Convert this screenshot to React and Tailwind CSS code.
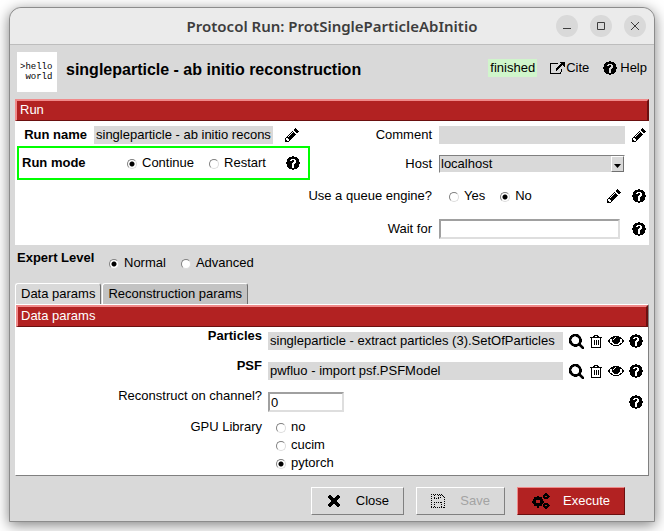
import React, { useState } from 'react';
import { FaQuestionCircle } from 'react-icons/fa';

const PATHS = {
    pencil: 'M491 1536l91-91-235-235-91 91v107h128v128h107zm523-928q0-22-22-22-10 0-17 7l-542 542q-7 7-7 17 0 22 22 22 10 0 17-7l542-542q7-7 7-17zm-54-192l416 416-832 832h-416v-416zm683 96q0 53-37 90l-166 166-416-416 166-165q36-38 90-38 53 0 91 38l235 234q37 39 37 91z',
    external: 'M1472 992v320q0 119-84.5 203.5t-203.5 84.5h-832q-119 0-203.5-84.5t-84.5-203.5v-832q0-119 84.5-203.5t203.5-84.5h704q14 0 23 9t9 23v64q0 14-9 23t-23 9h-704q-66 0-113 47t-47 113v832q0 66 47 113t113 47h832q66 0 113-47t47-113v-320q0-14 9-23t23-9h64q14 0 23 9t9 23zm384-864v512q0 26-19 45t-45 19-45-19l-176-176-652 652q-10 10-23 10t-23-10l-114-114q-10-10-10-23t10-23l652-652-176-176q-19-19-19-45t19-45 45-19h512q26 0 45 19t19 45z',
    eye: 'M1664 960q-152-236-381-353 61 104 61 225 0 185-131.5 316.5t-316.5 131.5-316.5-131.5-131.5-316.5q0-121 61-225-229 117-381 353 133 205 333.5 326.5t434.5 121.5 434.5-121.5 333.5-326.5zm-720-384q0-20-14-34t-34-14q-125 0-214.5 89.5t-89.5 214.5q0 20 14 34t34 14 34-14 14-34q0-86 61-147t147-61q20 0 34-14t14-34zm848 384q0 34-20 69-140 230-376.5 368.5t-499.5 138.5-499.5-139-376.5-368q-20-35-20-69t20-69q140-229 376.5-368t499.5-139 499.5 139 376.5 368q20 35 20 69z',
    search: 'M1216 832q0-185-131.5-316.5t-316.5-131.5-316.5 131.5-131.5 316.5 131.5 316.5 316.5 131.5 316.5-131.5 131.5-316.5zm512 832q0 52-38 90t-90 38q-54 0-90-38l-343-342q-179 124-399 124-143 0-273.5-55.5t-225-150-150-225-55.5-273.5 55.5-273.5 150-225 225-150 273.5-55.5 273.5 55.5 225 150 150 225 55.5 273.5q0 220-124 399l343 343q37 37 37 90z',
    times: 'M1490 1322q0 40-28 68l-136 136q-28 28-68 28t-68-28l-294-294-294 294q-28 28-68 28t-68-28l-136-136q-28-28-28-68t28-68l294-294-294-294q-28-28-28-68t28-68l136-136q28-28 68-28t68 28l294 294 294-294q28-28 68-28t68 28l136 136q28 28 28 68t-28 68l-294 294 294 294q28 28 28 68z',
};

const Pencil = () => (
    <svg viewBox="128 128 1536 1536" className="w-3.5 h-3.5" fill="currentColor" shapeRendering="crispEdges">
        <path d={PATHS.pencil} />
    </svg>
);

const External = () => (
    <svg viewBox="0 0 1856 1664" className="w-4 h-3.5" fill="currentColor" shapeRendering="crispEdges">
        <path d={PATHS.external} />
    </svg>
);

const Eye = () => (
    <svg viewBox="0 320 1792 1280" className="w-4 h-3" fill="currentColor" shapeRendering="crispEdges">
        <path d={PATHS.eye} />
    </svg>
);

const Times = () => (
    <svg viewBox="302 366 1188 1188" className="w-3 h-3" fill="currentColor" shapeRendering="crispEdges">
        <path d={PATHS.times} />
    </svg>
);

const Search = () => (
    <svg viewBox="64 128 1664 1664" className="w-[15px] h-[15px]" fill="currentColor" stroke="currentColor" strokeWidth="40" shapeRendering="crispEdges">
        <path d={PATHS.search} />
    </svg>
);

const Trash = () => (
    <svg viewBox="0 0 12 13" className="w-3 h-[13px]" fill="none" stroke="currentColor" shapeRendering="crispEdges">
        <path d="M3.5 2.5v-1h1v-1h3v1h1v1M0 2.5h12M1.5 2.5v10h9v-10M4.5 5v5M6.5 5v5M8.5 5v5" />
    </svg>
);

const Floppy = () => (
    <svg viewBox="0 0 14 14" className="w-3.5 h-3.5" fill="none" stroke="currentColor" strokeDasharray="1 1" shapeRendering="crispEdges">
        <path d="M0 .5h11M13.5 3v11M0 13.5h14M.5 0v14M11 1.5h1M12 2.5h1M3.5 1v4M3 4.5h6M9.5 1v4M7.5 1v3M3.5 8v6M3 8.5h8M10.5 8v6" />
    </svg>
);

const Cogs = () => (
    <svg viewBox="0 0 18 16" className="w-[18px] h-4" fill="none" stroke="currentColor" shapeRendering="crispEdges">
        <circle cx="6" cy="8.5" r="3.5" strokeWidth="3" />
        <path d="M6 2.5v2M6 12.5v2M0 8.5h2M10 8.5h2M2 4.5l1.5 1.5M10 4.5L8.5 6M2 12.5L3.5 11M10 12.5L8.5 11" strokeWidth="2" />
        <circle cx="14" cy="3.5" r="1.8" strokeWidth="2" />
        <path d="M14 0v1M11 3.5h1M16.5 3.5h1M12 1l1 1M16 1l-1 1M12 6l1-1M16 6l-1-1" strokeWidth="1.4" />
        <circle cx="14" cy="12.5" r="1.8" strokeWidth="2" />
        <path d="M14 15v1M11 12.5h1M16.5 12.5h1M12 10l1 1M16 10l-1 1M12 15l1-1M16 15l-1-1" strokeWidth="1.4" />
    </svg>
);

const Help = () => <FaQuestionCircle className="w-3.5 h-3.5" shapeRendering="crispEdges" />;

const IconButton = ({ label, children }) => (
    <button type="button" aria-label={label} className="shrink-0 flex items-center justify-center w-4 h-4">
        {children}
    </button>
);

const Radio = ({ name, label, checked }) => (
    <label className="flex items-center gap-[5px]">
        <input
            type="radio"
            name={name}
            defaultChecked={checked}
            className="appearance-none w-2.5 h-2.5 mt-0.5 rounded-full bg-white border border-t-[#808080] border-l-[#808080] border-b-[#dcdcdc] border-r-[#dcdcdc] checked:bg-[radial-gradient(circle,#000_2px,#fff_3px)]"
        />
        {label}
    </label>
);

const SectionTitle = ({ children }) => (
    <h2 className="h-[22px] px-[3px] leading-[17px] bg-[#b22222] text-white border-2 border-b border-t-[#f08a8a] border-l-[#f08a8a] border-b-[#6b1010] border-r-[#6b1010]">
        {children}
    </h2>
);

const RunRow = ({ label, id, className, children }) => (
    <div className={`flex items-center ${className}`}>
        <label htmlFor={id} className="flex-1 min-w-0 pr-[7px] flex justify-end whitespace-nowrap">{label}</label>
        <div className="w-[208px] shrink-0 flex items-center justify-between">{children}</div>
    </div>
);

const ParamRow = ({ label, id, bold, className, children }) => (
    <div className={`flex items-start ${className}`}>
        <label htmlFor={id} className={`w-[246px] pr-[6px] text-right leading-[18px] ${bold ? 'font-bold' : ''}`}>{label}</label>
        <div className="flex-1 flex items-center">{children}</div>
    </div>
);

const PointerField = ({ id, value }) => (
    <div className="flex-1 flex items-center pt-[5px]">
        <input id={id} readOnly defaultValue={value} className="flex-1 min-w-0 h-[18px] mr-[5px] px-0.5 bg-[#d9d9d9]" />
        <div className="flex items-center gap-1">
            <IconButton label="Search"><Search /></IconButton>
            <IconButton label="Remove"><Trash /></IconButton>
            <IconButton label="View"><Eye /></IconButton>
            <IconButton label="Help"><Help /></IconButton>
        </div>
    </div>
);

const tabs = ['Data params', 'Reconstruction params'];

const App = () => {
    const [tab, setTab] = useState(tabs[0]);

    return (
        <div className="min-h-screen bg-white px-[9px] pt-[7px] pb-2 font-['Liberation_Sans',Arial,sans-serif] text-[13px] leading-[18px] text-black">
            <main className="rounded-t-xl border border-[#8c8c8c] bg-[#d9d9d9] shadow-[0_3px_14px_rgba(0,0,0,0.5)]">
                {/* Title bar */}
                <header className="relative h-[37px] flex items-center justify-end gap-3 pr-2 rounded-t-xl bg-[#ebebeb] border-b border-[#bdbdbd]">
                    <h1 className="absolute inset-x-0 text-center font-['Noto_Sans','Open_Sans',sans-serif] text-[15px] font-semibold text-[#3d3d3d]">
                        Protocol Run: ProtSingleParticleAbInitio
                    </h1>
                    {[
                        ['Minimize', 'M7 13.5h8'],
                        ['Maximize', 'M7.5 7.5h7v7h-7z'],
                        ['Close window', 'M7 7l8 8M15 7l-8 8'],
                    ].map(([label, d]) => (
                        <button key={label} type="button" aria-label={label} className="relative w-[22px] h-[22px] rounded-full bg-[#d9d9d9]">
                            <svg viewBox="0 0 22 22" fill="none" stroke="#3d3d3d"><path d={d} /></svg>
                        </button>
                    ))}
                </header>

                {/* Protocol header */}
                <div className="h-[54px] flex items-center px-[7px]">
                    <div className="w-10 h-10 pt-2.5 pl-[3px] bg-white whitespace-pre font-['Liberation_Mono',monospace] text-[9px] leading-[10px]">
                        {'>hello\n world'}
                    </div>
                    <div className="flex-1 pl-[9px] pb-1 text-[16px] font-bold">singleparticle - ab initio reconstruction</div>
                    <div className="flex items-center pb-2">
                        <span className="px-0.5 bg-[#d0f5cb] leading-[18px]">finished</span>
                        <a href="#cite" className="ml-3 flex items-center gap-px"><External />Cite</a>
                        <a href="#help" className="ml-3.5 flex items-center gap-[3px]"><Help />Help</a>
                    </div>
                </div>

                {/* Run */}
                <section className="mx-[5px] bg-white">
                    <SectionTitle>Run</SectionTitle>
                    <div className="flex">
                        <div className="w-[295px] shrink-0 pl-0.5">
                            <div className="mt-[5px] flex items-center">
                                <label htmlFor="runName" className="w-[77px] pr-[7px] text-right font-bold">Run name</label>
                                <input id="runName" defaultValue="singleparticle - ab initio reconstruction" className="w-[179px] h-[18px] mr-[11px] px-0.5 bg-[#d9d9d9]" />
                                <IconButton label="Edit run name"><Pencil /></IconButton>
                            </div>
                            <div className="mt-0.5 h-[34px] flex items-center pl-[3px] pr-[7px] border-2 border-[#00ff00]">
                                <span className="w-[105px] font-bold">Run mode</span>
                                <div className="flex-1 flex gap-[15px]">
                                    <Radio name="mode" label="Continue" checked />
                                    <Radio name="mode" label="Restart" />
                                </div>
                                <IconButton label="Help"><Help /></IconButton>
                            </div>
                        </div>
                        <div className="flex-1 min-w-0 pr-0.5">
                            <RunRow label="Comment" id="comment" className="h-7">
                                <input id="comment" className="w-[186px] h-[18px] px-0.5 bg-[#d9d9d9]" />
                                <IconButton label="Edit comment"><Pencil /></IconButton>
                            </RunRow>
                            <RunRow label="Host" id="host" className="h-[30px]">
                                <div className="relative w-[186px]">
                                    <select id="host" className="block appearance-none w-full h-[18px] px-px leading-4 bg-[#d9d9d9] border border-t-[#808080] border-l-[#808080] border-b-white border-r-white">
                                        <option>localhost</option>
                                    </select>
                                    <span className="pointer-events-none absolute right-px top-px w-[13px] h-4 flex items-end justify-center pb-[3px] bg-[#d9d9d9] border border-t-white border-l-white border-b-[#707070] border-r-[#707070]">
                                        <svg viewBox="0 0 7 4" className="w-[7px] h-1"><path d="M0 0h7L3.5 4z" /></svg>
                                    </span>
                                </div>
                            </RunRow>
                            <RunRow label="Use a queue engine?" className="h-[34px]">
                                <div className="pl-2.5 flex gap-[15px]">
                                    <Radio name="queue" label="Yes" />
                                    <Radio name="queue" label="No" checked />
                                </div>
                                <div className="flex gap-[9px]">
                                    <IconButton label="Edit queue"><Pencil /></IconButton>
                                    <IconButton label="Help"><Help /></IconButton>
                                </div>
                            </RunRow>
                            <RunRow label="Wait for" id="waitFor" className="h-8">
                                <input id="waitFor" className="w-[181px] h-5 px-0.5 bg-white border-2 border-t-[#a0a0a0] border-l-[#a0a0a0] border-b-[#dedede] border-r-[#dedede]" />
                                <IconButton label="Help"><Help /></IconButton>
                            </RunRow>
                        </div>
                    </div>
                </section>

                {/* Expert level */}
                <div className="h-[38px] pt-1 pl-[7px] flex items-start">
                    <span className="w-[92px] font-bold">Expert Level</span>
                    <div className="pt-[5px] flex gap-[15px]">
                        <Radio name="level" label="Normal" checked />
                        <Radio name="level" label="Advanced" />
                    </div>
                </div>

                {/* Params */}
                <div role="tablist" className="mx-[5px] flex">
                    {tabs.map((t) => (
                        <button
                            key={t}
                            type="button"
                            role="tab"
                            aria-selected={tab === t}
                            onClick={() => setTab(t)}
                            className={`h-[21px] px-[5px] mr-px rounded-t-[3px] border border-b-0 border-t-white border-l-white border-r-[#707070] ${tab === t ? 'bg-[#d9d9d9]' : 'bg-[#c3c3c3]'}`}
                        >
                            {t}
                        </button>
                    ))}
                </div>
                <section className="mx-[5px] min-h-[172px] bg-white border border-t-white border-l-white border-r-[#808080] border-b-[#808080]">
                    <SectionTitle>{tab}</SectionTitle>
                    {tab === tabs[0] && (
                        <div className="pl-1.5 pr-1">
                            <ParamRow label="Particles" id="particles" bold className="h-[30px]">
                                <PointerField id="particles" value="singleparticle - extract particles (3).SetOfParticles" />
                            </ParamRow>
                            <ParamRow label="PSF" id="psf" bold className="h-[30px]">
                                <PointerField id="psf" value="pwfluo - import psf.PSFModel" />
                            </ParamRow>
                            <ParamRow label="Reconstruct on channel?" id="channel" className="h-[30px]">
                                <div className="flex-1 flex items-center justify-between pt-[5px]">
                                    <input id="channel" defaultValue="0" className="w-[76px] h-5 px-px bg-white border-2 border-t-[#a0a0a0] border-l-[#a0a0a0] border-b-[#dedede] border-r-[#dedede]" />
                                    <IconButton label="Help"><Help /></IconButton>
                                </div>
                            </ParamRow>
                            <ParamRow label="GPU Library" className="pt-px">
                                <div className="pl-2">
                                    <Radio name="gpu" label="no" />
                                    <Radio name="gpu" label="cucim" />
                                    <Radio name="gpu" label="pytorch" checked />
                                </div>
                            </ParamRow>
                        </div>
                    )}
                </section>

                {/* Actions */}
                <footer className="pt-[11px] pb-1.5 pr-[29px] flex justify-end gap-3">
                    <button type="button" className="w-[93px] h-7 pl-4 pr-3.5 flex items-center justify-between border border-t-white border-l-white border-b-[#808080] border-r-[#808080]">
                        <Times />
                        Close
                    </button>
                    <button type="button" disabled className="w-[89px] h-7 px-3.5 flex items-center justify-between border border-t-white border-l-white border-b-[#808080] border-r-[#808080]">
                        <span className="text-black"><Floppy /></span>
                        <span className="text-[#a3a3a3]">Save</span>
                    </button>
                    <button type="button" className="w-[108px] h-7 px-3.5 flex items-center justify-between bg-[#b22222] border border-t-[#f08a8a] border-l-[#f08a8a] border-b-[#6b1010] border-r-[#6b1010]">
                        <Cogs />
                        <span className="text-white">Execute</span>
                    </button>
                </footer>
            </main>
        </div>
    );
};

export default App;
